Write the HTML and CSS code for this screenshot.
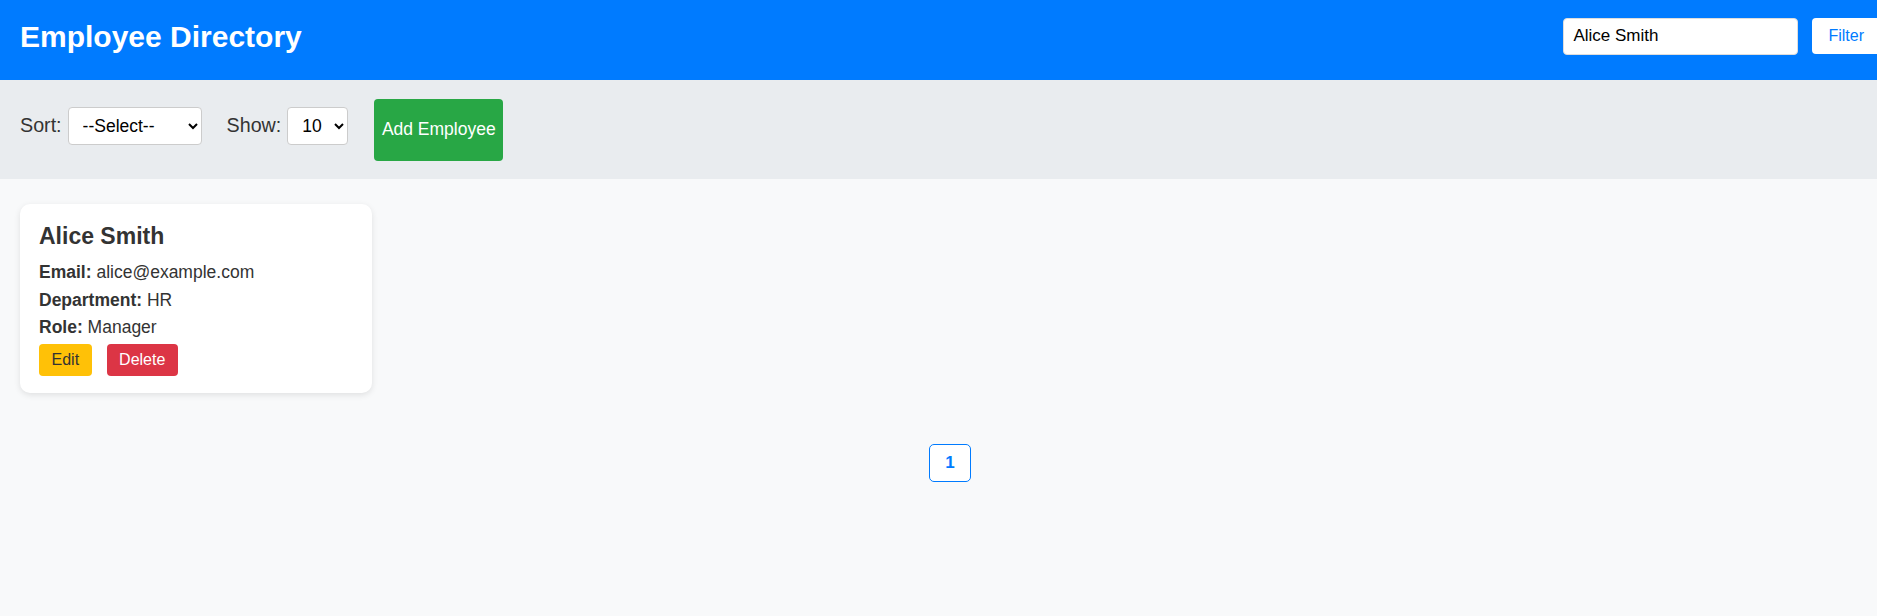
FILE: index.html
```html
<!DOCTYPE html>
<html lang="en">
<head>
<meta charset="utf-8">
<title>Employee Directory</title>
<link rel="stylesheet" href="styles.css">
</head>
<body>
<header class="topbar">
  <h1 class="title">Employee Directory</h1>
  <form class="search">
    <input class="search-input" type="text" value="Alice Smith">
    <button class="filter-btn" type="button">Filter</button>
  </form>
</header>
<section class="toolbar">
  <label class="tool-label">Sort:</label>
  <select class="select select-sort"><option>--Select--</option></select>
  <label class="tool-label gap">Show:</label>
  <select class="select select-show"><option>10</option></select>
  <button class="add-btn" type="button">Add Employee</button>
</section>
<main class="content">
  <div class="cards">
    <div class="card">
      <h3 class="card-name">Alice Smith</h3>
      <p class="card-line"><strong>Email:</strong> alice@example.com</p>
      <p class="card-line"><strong>Department:</strong> HR</p>
      <p class="card-line"><strong>Role:</strong> Manager</p>
      <div class="card-actions">
        <button class="btn btn-edit" type="button">Edit</button>
        <button class="btn btn-delete" type="button">Delete</button>
      </div>
    </div>
  </div>
  <nav class="pagination">
    <button class="page-btn" type="button">1</button>
  </nav>
</main>
</body>
</html>
```
FILE: styles.css
```css
* { box-sizing: border-box; }
html, body {
  margin: 0;
  padding: 0;
  overflow: hidden;
}
body {
  font-family: "Liberation Sans", Arial, sans-serif;
  background: #f8f9fa;
  color: #333;
  height: 616px;
}
.topbar {
  height: 80px;
  background: #007bff;
  display: flex;
  align-items: center;
  justify-content: space-between;
  padding: 0 0 8px 20px;
}
.title {
  margin: 0;
  color: #fff;
  font-size: 30px;
  font-weight: bold;
  line-height: 1;
  position: relative;
  top: 1px;
}
.search {
  display: flex;
  align-items: center;
  gap: 14px;
  margin: 0 -3px 0 0;
  flex-shrink: 0;
}
.search-input {
  width: 235px;
  height: 37px;
  border: 1px solid #ddd;
  border-radius: 4px;
  padding: 0 9px;
  font-family: "Liberation Sans", Arial, sans-serif;
  font-size: 17px;
  color: #000;
  background: #fff;
  outline: none;
}
.filter-btn {
  height: 36px;
  border: none;
  border-radius: 4px;
  background: #fff;
  color: #007bff;
  font-family: "Liberation Sans", Arial, sans-serif;
  font-size: 16px;
  padding: 0 16px;
}
.toolbar {
  height: 99px;
  background: #e9ecef;
  display: flex;
  align-items: center;
  padding: 0 20px;
}
.tool-label {
  font-size: 19.7px;
  color: #333;
  margin-right: 6px;
  margin-bottom: 8px;
}
.tool-label.gap { margin-left: 25px; }
.select {
  height: 38px;
  border: 1px solid #ccc;
  border-radius: 4px;
  background: #fff;
  font-family: "Liberation Sans", Arial, sans-serif;
  font-size: 17.5px;
  color: #000;
  padding: 0 6px 0 10px;
  margin-bottom: 8px;
}
.select-sort { width: 134px; }
.select-show { width: 61px; }
.add-btn {
  margin-left: 26px;
  width: 129px;
  height: 62px;
  border: none;
  border-radius: 4px;
  background: #28a745;
  color: #fff;
  font-family: "Liberation Sans", Arial, sans-serif;
  font-size: 17.5px;
  padding: 0;
}
.content {
  padding: 25px 20px 0;
}
.cards {
  display: flex;
  gap: 20px;
}
.card {
  width: 352px;
  background: #fff;
  border-radius: 10px;
  box-shadow: 0 2px 6px rgba(0, 0, 0, 0.1);
  padding: 19px 19px 17px;
}
.card-name {
  margin: 0 0 10px;
  font-size: 23px;
  line-height: 26px;
  font-weight: bold;
  color: #333;
}
.card-line {
  margin: 0;
  font-size: 17.5px;
  line-height: 27.5px;
  color: #333;
}
.card-actions {
  display: flex;
  gap: 15px;
  margin-top: 2px;
}
.btn {
  height: 32px;
  border: none;
  border-radius: 4px;
  font-family: "Liberation Sans", Arial, sans-serif;
  font-size: 16px;
  padding: 0 12.5px;
}
.btn-edit { background: #ffc107; color: #333; }
.btn-delete { background: #dc3545; color: #fff; }
.pagination {
  display: flex;
  justify-content: center;
  margin: 51px -20px 0 -20px;
  padding-left: 23px;
}
.page-btn {
  width: 42px;
  height: 38px;
  border: 1px solid #007bff;
  border-radius: 5px;
  background: #fff;
  color: #007bff;
  font-family: "Liberation Sans", Arial, sans-serif;
  font-size: 17px;
  font-weight: bold;
  padding: 0;
}
```
